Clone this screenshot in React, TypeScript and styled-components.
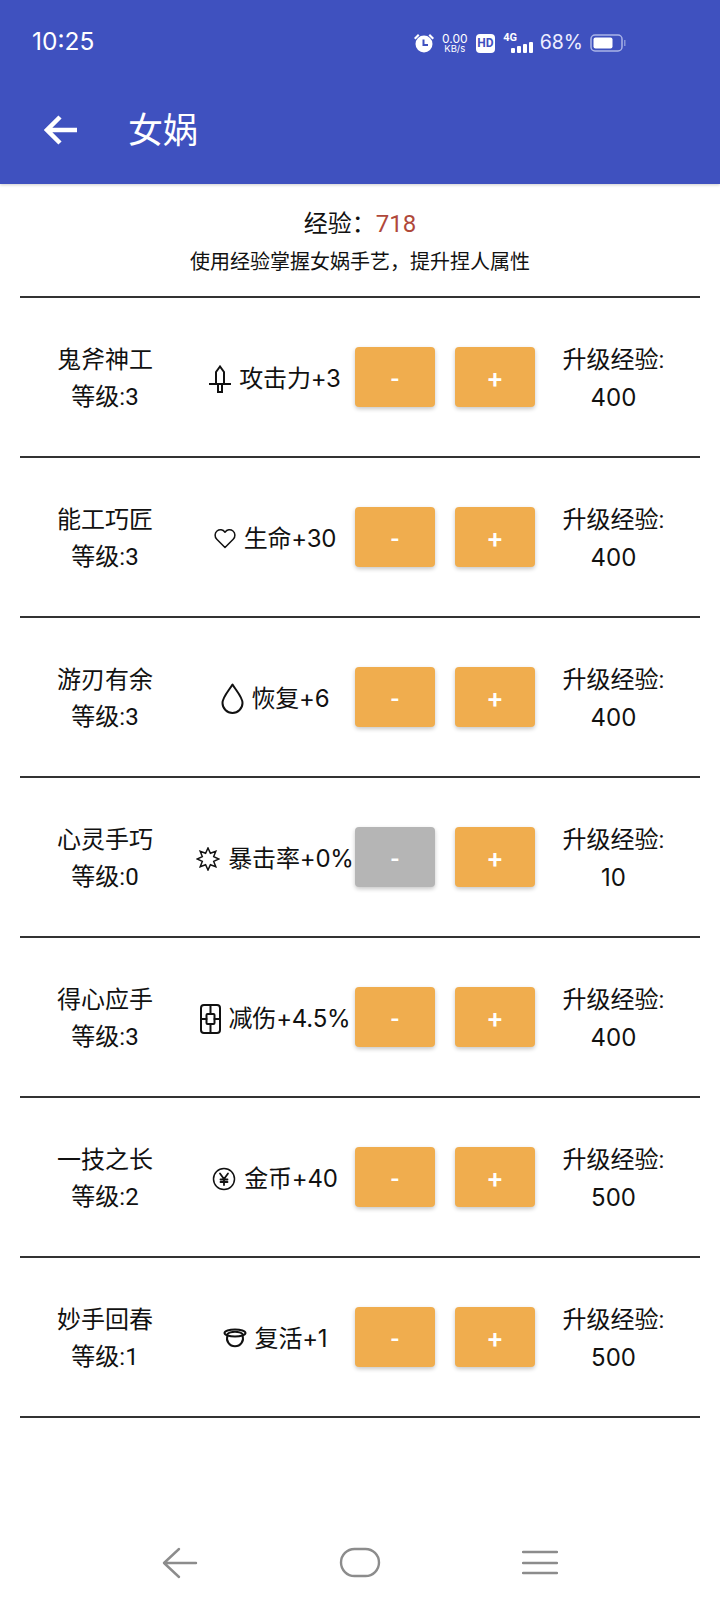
import React from "react";
import styled, { createGlobalStyle } from "styled-components";

const Global = createGlobalStyle`
  html, body { margin: 0; padding: 0; background: #fff; }
  body { font-family: Roboto, "Noto Sans CJK SC", sans-serif; }
`;

const Page = styled.div`
  width: 720px;
  height: 1605px;
  display: flex;
  flex-direction: column;
  color: #111;
  overflow: hidden;
`;

const Header = styled.header`
  height: 184px;
  flex: none;
  background: #3f51bf;
  color: #fff;
  box-shadow: 0 1px 3px rgba(0, 0, 0, 0.2);
  display: flex;
  flex-direction: column;
`;

const StatusBar = styled.div`
  height: 82px;
  padding: 0 0 0 32px;
  display: flex;
  align-items: center;
`;

const Time = styled.span`
  font: 400 24.5px/1 Inter, sans-serif;
  flex: 1;
  margin-top: 1px;
`;

const StatusIcons = styled.div`
  display: flex;
  align-items: center;
  width: 213px;
  margin-right: 94px;
  margin-top: 4px;
`;

const Speed = styled.div`
  width: 28px;
  margin-left: 6px;
  font: 400 12px/11px Inter, sans-serif;
  text-align: center;
  small {
    display: block;
    font-size: 9.5px;
    line-height: 9px;
  }
`;

const HdBadge = styled.span`
  width: 20px;
  height: 19px;
  margin-left: 7px;
  background: #fff;
  border-radius: 4px;
  color: #3f51bf;
  font: 700 12px/19px Roboto, sans-serif;
  text-align: center;
`;

const Signal = styled.div`
  margin-left: 8px;
  width: 32px;
  display: flex;
  flex-direction: column;
  font: 700 11px/9px Roboto, sans-serif;
`;

const Bars = styled.div`
  display: flex;
  align-items: flex-end;
  gap: 2px;
  margin-left: 8px;
  height: 11px;
`;

const Bar = styled.i<{ $h: number }>`
  display: block;
  width: 4px;
  height: ${(p) => p.$h}px;
  background: #fff;
  border-radius: 1px;
`;

const Percent = styled.span`
  margin-left: 5px;
  font: 400 19.5px/1 Inter, sans-serif;
  color: #eef;
`;

const Toolbar = styled.div`
  flex: 1;
  display: flex;
  align-items: center;
  padding: 0 0 12px 44px;
`;

const BackArrow = styled.svg`
  margin-top: 6px;
  flex: none;
`;

const Title = styled.h1`
  margin: 0 0 0 51px;
  font: 400 35px/1 "Noto Sans CJK SC", sans-serif;
`;

const Summary = styled.div`
  height: 112px;
  flex: none;
  padding-top: 20px;
  box-sizing: border-box;
  text-align: center;
`;

const Exp = styled.div`
  font-size: 24px;
  line-height: 40px;
  em {
    font-style: normal;
    color: #b0483a;
  }
`;

const Hint = styled.div`
  font-size: 20px;
  line-height: 32px;
  margin-top: 2px;
`;

const List = styled.div`
  margin: 0 20px;
  border-top: 2px solid #333;
`;

const Row = styled.div`
  height: 158px;
  border-bottom: 2px solid #333;
  display: grid;
  grid-template-columns: 170px 165px 180px 165px;
  align-items: center;
`;

const Cell = styled.div`
  font-size: 24px;
  line-height: 37px;
  padding-top: 4px;
  text-align: center;
`;

const CostCell = styled(Cell)`
  padding-right: 8px;
  b {
    font: 400 24px/37px Inter, sans-serif;
  }
`;

const Effect = styled.div`
  font-family: Inter, "Noto Sans CJK SC", sans-serif;
  font-size: 24px;
  letter-spacing: -0.2px;
  line-height: 38px;
  padding: 3px 0 0 5px;
  display: flex;
  align-items: center;
  justify-content: center;
  gap: 8px;
  white-space: nowrap;
  svg {
    flex: none;
  }
`;

const Buttons = styled.div`
  display: flex;
  gap: 20px;
`;

const Btn = styled.button<{ $off?: boolean }>`
  width: 80px;
  height: 60px;
  padding: 4px 0 0;
  border: 0;
  border-radius: 4px;
  background: ${(p) => (p.$off ? "#b5b5b5" : "#f0ad4e")};
  color: #fff;
  font: 500 26px/1 Roboto, sans-serif;
  box-shadow: 0 2px 4px rgba(0, 0, 0, 0.22);
`;

const Nav = styled.nav`
  margin-top: auto;
  height: 58px;
  flex: none;
  display: grid;
  grid-template-columns: repeat(3, 180px);
  justify-content: center;
  justify-items: center;
  align-items: start;
  box-sizing: border-box;
`;

const Ico = {
  stroke: "#111",
  fill: "none",
  strokeWidth: 2,
  strokeLinejoin: "round" as const,
  strokeLinecap: "round" as const,
};

const Sword = () => (
  <svg width="22" height="28" viewBox="0 0 22 28" {...Ico} strokeLinejoin="miter" strokeLinecap="butt">
    <path d="M11 1.500 7 7v12h8V7z" />
    <path d="M0 19h22M9 19v8h4v-8" />
  </svg>
);
const Heart = () => (
  <svg width="22" height="21" viewBox="0 0 22 21" {...Ico} strokeWidth={1.5}>
    <path d="M11 19.500 2.800 11.200C.4 8.700.6 5 3 3c2.500-2 6-1.600 8 1.200C13 1.400 16.500 1 19 3c2.400 2 2.600 5.700.2 8.200z" />
  </svg>
);
const Drop = () => (
  <svg width="23" height="31" viewBox="0 0 23 31" {...Ico}>
    <path d="M11.500 1.500C8 7.500 1.500 14 1.500 20a10 10 0 0 0 20 0C21.500 14 15 7.500 11.500 1.500z" />
  </svg>
);
const burst = Array.from({ length: 16 }, (_, i) => {
  const r = i % 2 === 0 ? 11 : 6.2;
  const a = (i * Math.PI) / 8 - Math.PI / 2;
  return `${(12 + r * Math.cos(a)).toFixed(1)},${(12 + r * Math.sin(a)).toFixed(1)}`;
}).join(" ");
const Burst = () => (
  <svg width="24" height="24" viewBox="0 0 24 24" {...Ico} strokeWidth={1.5} strokeLinejoin="miter">
    <polygon points={burst} />
  </svg>
);
const Shield = () => (
  <svg width="21" height="30" viewBox="0 0 21 30" {...Ico}>
    <rect x="1" y="1" width="19" height="28" rx="3" />
    <rect x="6.500" y="10" width="8" height="10" rx="1" />
    <path d="M10.500 1v9M10.500 20v9M1 15h5.500M14.500 15H20" />
  </svg>
);
const Yen = () => (
  <svg width="24" height="24" viewBox="0 0 24 24" {...Ico} strokeWidth={1.5}>
    <circle cx="12" cy="12" r="10.500" />
    <path d="M8 6.500 12 12l4-5.500M12 12v6M8.500 12.500h7M8.500 15h7" strokeWidth={1.800} />
  </svg>
);
const Halo = () => (
  <svg width="24" height="22" viewBox="0 0 24 22" {...Ico}>
    <ellipse cx="12" cy="5" rx="10.500" ry="3.500" />
    <path d="M4.500 7.500a8 8 0 1 0 15 0M4.500 6c3-3 12-3 15 0" />
  </svg>
);

const NavStroke = { stroke: "#8c8c8c", fill: "none", strokeWidth: 2.4, strokeLinecap: "round" as const, strokeLinejoin: "round" as const };

const rows = [
  { name: "鬼斧神工", level: 3, icon: <Sword />, effect: "攻击力+3", cost: 400 },
  { name: "能工巧匠", level: 3, icon: <Heart />, effect: "生命+30", cost: 400 },
  { name: "游刃有余", level: 3, icon: <Drop />, effect: "恢复+6", cost: 400 },
  { name: "心灵手巧", level: 0, icon: <Burst />, effect: "暴击率+0%", cost: 10 },
  { name: "得心应手", level: 3, icon: <Shield />, effect: "减伤+4.5%", cost: 400 },
  { name: "一技之长", level: 2, icon: <Yen />, effect: "金币+40", cost: 500 },
  { name: "妙手回春", level: 1, icon: <Halo />, effect: "复活+1", cost: 500 },
];

export default function App() {
  return (
    <Page>
      <Global />
      <Header>
        <StatusBar>
          <Time>10:25</Time>
          <StatusIcons>
            <svg width="22" height="22" viewBox="0 0 22 22" fill="#fff" style={{ flex: "none" }}>
              <path d="M1 6 5 2l1.500 1.500-4 4zM21 6l-4-4-1.500 1.500 4 4z" />
              <circle cx="11" cy="12" r="8.500" />
              <path d="M10.500 7.500v5.500h4.500" fill="none" stroke="#3f51bf" strokeWidth="2" />
            </svg>
            <Speed>
              0.00<small>KB/s</small>
            </Speed>
            <HdBadge>HD</HdBadge>
            <Signal>
              4G
              <Bars>
                <Bar $h={5} />
                <Bar $h={7} />
                <Bar $h={9} />
                <Bar $h={11} />
              </Bars>
            </Signal>
            <Percent>68%</Percent>
            <svg style={{ marginLeft: 7, flex: "none" }} width="36" height="18" viewBox="0 0 36 18">
              <rect x="1" y="1" width="31" height="16" rx="4" fill="none" stroke="#aab4e8" strokeWidth="1.500" />
              <rect x="3.500" y="3.500" width="19" height="11" rx="2" fill="#fff" />
              <rect x="34" y="6" width="1.500" height="6" fill="#8895d8" />
            </svg>
          </StatusIcons>
        </StatusBar>
        <Toolbar>
          <BackArrow width="33" height="30" viewBox="0 0 33 30" fill="none" stroke="#fff" strokeWidth="4.500">
            <path d="M33 15H3M16 2 3 15l13 13" />
          </BackArrow>
          <Title>女娲</Title>
        </Toolbar>
      </Header>
      <Summary>
        <Exp>
          经验：<em>718</em>
        </Exp>
        <Hint>使用经验掌握女娲手艺，提升捏人属性</Hint>
      </Summary>
      <List>
        {rows.map((r) => (
          <Row key={r.name}>
            <Cell>
              {r.name}
              <br />
              等级:{r.level}
            </Cell>
            <Effect>
              {r.icon}
              <span>{r.effect}</span>
            </Effect>
            <Buttons>
              <Btn $off={r.level === 0}>-</Btn>
              <Btn>+</Btn>
            </Buttons>
            <CostCell>
              升级经验:
              <br />
              <b>{r.cost}</b>
            </CostCell>
          </Row>
        ))}
      </List>
      <Nav>
        <svg width="36" height="32" viewBox="0 0 36 32" {...NavStroke}>
          <path d="M34 16H2M17 2 2 16l15 14" />
        </svg>
        <svg width="42" height="32" viewBox="0 0 42 32" {...NavStroke}>
          <rect x="2" y="2" width="38" height="27" rx="13.500" />
        </svg>
        <svg width="36" height="32" viewBox="0 0 36 32" {...NavStroke}>
          <path d="M1 5h34M1 16h34M1 26h34" />
        </svg>
      </Nav>
    </Page>
  );
}
